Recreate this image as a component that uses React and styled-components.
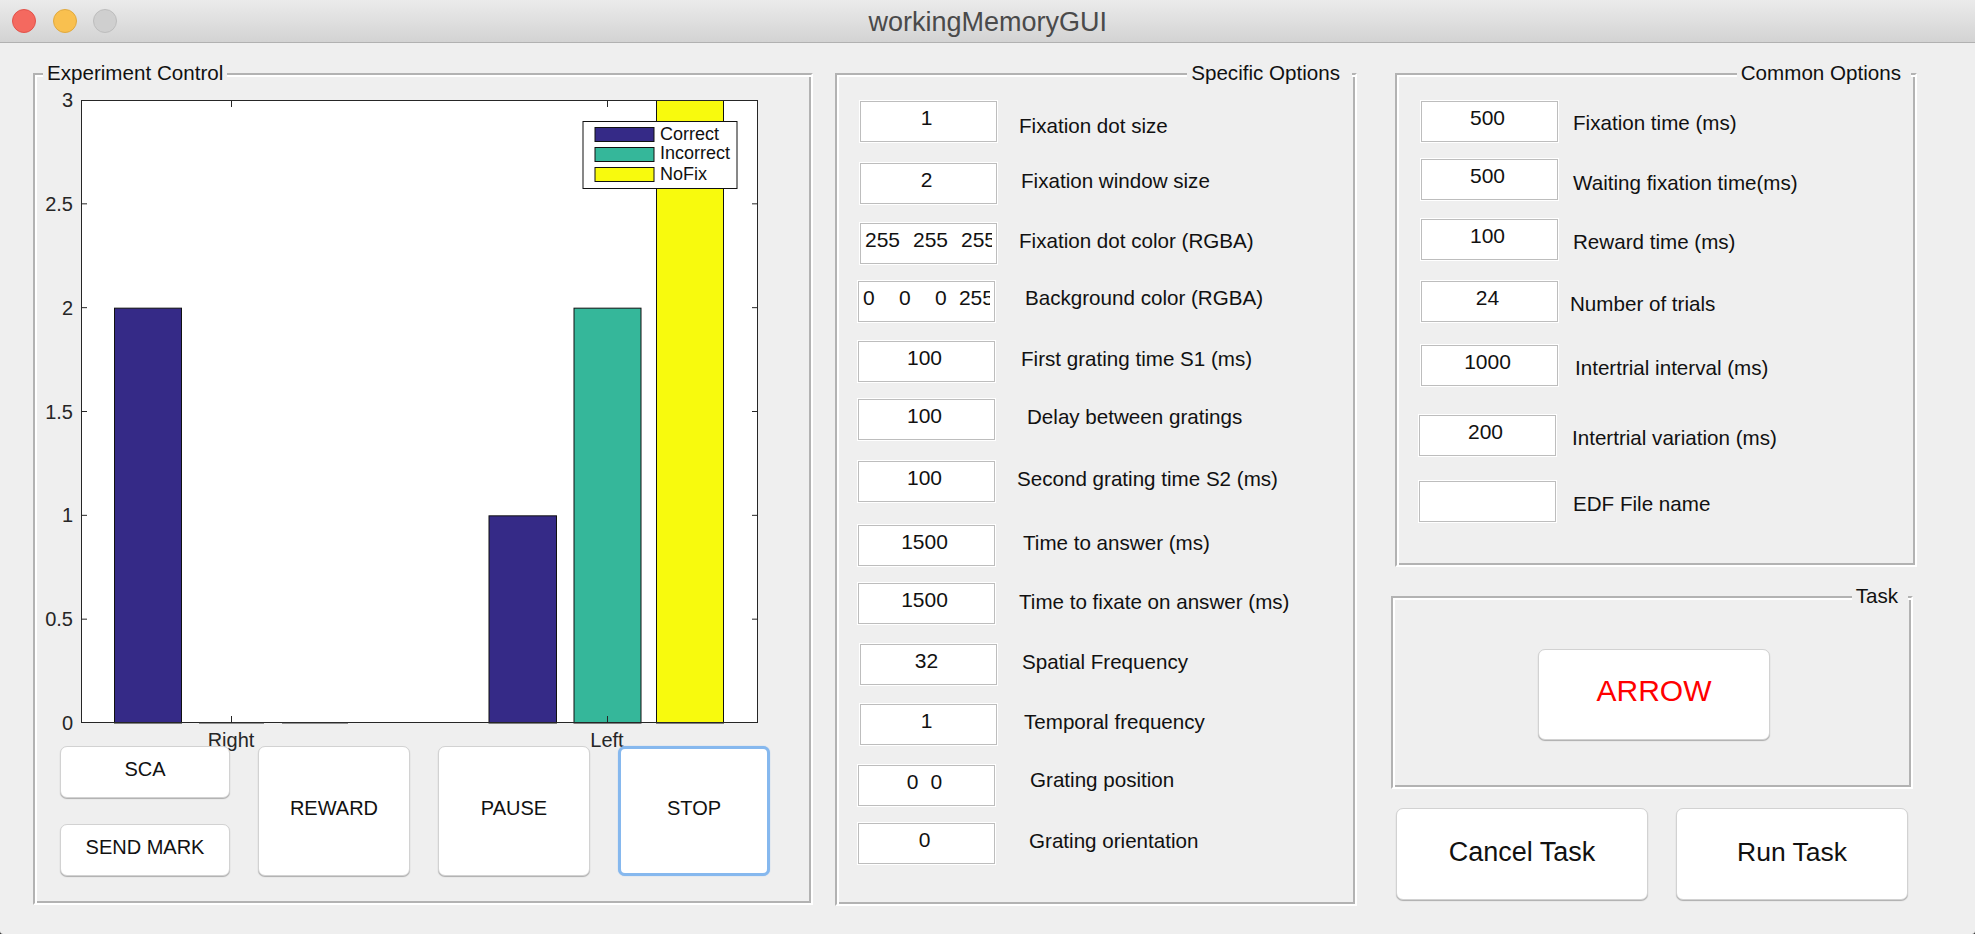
import React from 'react'
import styled, { createGlobalStyle } from 'styled-components'

const GlobalStyle = createGlobalStyle`
    html, body {
        margin: 0;
        padding: 0;
        background: #2e2e2e;
    }
    body {
        font-family: "Liberation Sans", Arial, sans-serif;
        color: #111;
    }
`

const Window = styled.div`
    width: 1975px;
    height: 934px;
    overflow: hidden;
    background: #efefef;
    border-radius: 0 0 3px 3px;
`

const TitleBar = styled.div`
    height: 43px;
    display: flex;
    align-items: center;
    box-sizing: border-box;
    padding-left: 12px;
    gap: 16.5px;
    background: linear-gradient(#ebebeb, #d3d3d3);
    border-bottom: 1px solid #b1b1b1;
`

const Light = styled.span`
    width: 24px;
    height: 24px;
    box-sizing: border-box;
    border-radius: 50%;
    background: ${props => props.$color};
    border: 1px solid ${props => props.$edge};
`

const Title = styled.div`
    flex: 1;
    margin-right: 133px;
    padding-top: 2px;
    text-align: center;
    font-size: 27px;
    color: #4a4a4a;
`

const Body = styled.div`
    display: flex;
    align-items: flex-start;
    padding: 30px 0 0 33px;
`

const Panel = styled.fieldset`
    position: relative;
    margin: ${props => props.$top || 0}px 0 0 ${props => props.$offset || 0}px;
    padding: 0;
    min-width: 0;
    box-sizing: border-box;
    width: ${props => props.$width}px;
    height: ${props => props.$height}px;
    border-style: solid;
    border-width: 2px;
    border-color: #b2b2b2 #fff #fff #b2b2b2;
    box-shadow: inset 2px 2px 0 #fff, inset -2px -2px 0 #b2b2b2;
`

const PanelTitle = styled.span`
    position: absolute;
    top: -14px;
    ${props => props.$right !== undefined ? `right: ${props.$right}px;` : `left: ${props.$left}px;`}
    padding: 0 ${props => props.$pad}px 0 4px;
    background: #efefef;
    font-size: 20.6px;
    line-height: 24px;
    white-space: nowrap;
`

const Chart = styled.svg`
    display: block;
    font-family: "Liberation Sans", Arial, sans-serif;
`

const Controls = styled.div`
    position: relative;
    display: flex;
    gap: 28px;
    margin-top: -6px;
    padding-left: 25px;
`

const StackedButtons = styled.div`
    display: flex;
    flex-direction: column;
    gap: 26px;
`

const Button = styled.button`
    width: ${props => props.$width}px;
    height: ${props => props.$height}px;
    box-sizing: border-box;
    padding: 0 0 ${props => props.$lift || 5}px;
    background: #fff;
    border: 1px solid #d2d2d2;
    border-radius: 7px;
    box-shadow: 0 1px 1px rgba(0, 0, 0, 0.28);
    font-family: inherit;
    font-size: ${props => props.$size || 20}px;
    color: ${props => props.$color || '#111'};
`

const FocusedButton = styled(Button)`
    border: 3px solid #86b8ee;
    box-shadow: 0 0 1px #86b8ee;
`

const RightColumn = styled.div`
    margin-left: 38px;
`

const TaskInner = styled.div`
    padding: 51px 0 0 145px;
`

const TaskButtons = styled.div`
    display: flex;
    gap: 28px;
    margin: 19px 0 0 1px;
`

const OptionList = styled.div`
    display: flex;
    flex-direction: column;
`

const OptionRow = styled.div`
    display: flex;
    align-items: flex-start;
    margin-top: ${props => props.$gap}px;
    padding-left: ${props => props.$inset}px;
`

const ValueInput = styled.input`
    flex: none;
    width: 137px;
    height: 41px;
    box-sizing: border-box;
    margin: 0;
    padding: 0 4px 7px ${props => props.$clip ? 4 : 0}px;
    background: #fff;
    border: 1px solid #bdbdbd;
    border-radius: 0;
    box-shadow: 0 0 0 1px #fff;
    outline: none;
    font-family: inherit;
    font-size: 21px;
    word-spacing: ${props => props.$clip === 'wide' ? 0.65 : 0.25}px;
    text-align: ${props => props.$clip ? 'left' : 'center'};
    color: #111;
`

const OptionLabel = styled.label`
    margin-left: ${props => props.$x}px;
    margin-top: ${props => props.$drop - 12}px;
    font-size: 20.6px;
    line-height: 24px;
    white-space: nowrap;
`

const specificOptions = [
    { value: '1', label: 'Fixation dot size', gap: 26, inset: 23, x: 22, drop: 25 },
    { value: '2', label: 'Fixation window size', gap: 21, inset: 23, x: 24, drop: 18 },
    { value: '255  255  255  255', clip: 'wide', label: 'Fixation dot color (RGBA)', gap: 19, inset: 23, x: 22, drop: 18 },
    { value: '0    0    0  255', clip: 'narrow', label: 'Background color (RGBA)', gap: 17, inset: 21, x: 30, drop: 17 },
    { value: '100', label: 'First grating time S1 (ms)', gap: 19, inset: 21, x: 26, drop: 18 },
    { value: '100', label: 'Delay between gratings', gap: 17, inset: 21, x: 32, drop: 18 },
    { value: '100', label: 'Second grating time S2 (ms)', gap: 21, inset: 21, x: 22, drop: 18 },
    { value: '1500', label: 'Time to answer (ms)', gap: 23, inset: 21, x: 28, drop: 18 },
    { value: '1500', label: 'Time to fixate on answer (ms)', gap: 17, inset: 21, x: 24, drop: 19 },
    { value: '32', label: 'Spatial Frequency', gap: 20, inset: 23, x: 25, drop: 18 },
    { value: '1', label: 'Temporal frequency', gap: 19, inset: 23, x: 27, drop: 18 },
    { value: '0  0', label: 'Grating position', gap: 20, inset: 21, x: 35, drop: 15 },
    { value: '0', label: 'Grating orientation', gap: 17, inset: 21, x: 34, drop: 18 },
]

const commonOptions = [
    { value: '500', label: 'Fixation time (ms)', gap: 26, inset: 24, x: 15, drop: 22 },
    { value: '500', label: 'Waiting fixation time(ms)', gap: 17, inset: 24, x: 15, drop: 24 },
    { value: '100', label: 'Reward time (ms)', gap: 19, inset: 24, x: 15, drop: 23 },
    { value: '24', label: 'Number of trials', gap: 21, inset: 24, x: 12, drop: 23 },
    { value: '1000', label: 'Intertrial interval (ms)', gap: 23, inset: 24, x: 17, drop: 23 },
    { value: '200', label: 'Intertrial variation (ms)', gap: 29, inset: 22, x: 16, drop: 23 },
    { value: '', label: 'EDF File name', gap: 25, inset: 22, x: 17, drop: 23 },
]

const Options = ({ rows }) => (
    <OptionList>
        {rows.map(row => (
            <OptionRow key={row.label} $gap={row.gap} $inset={row.inset}>
                <ValueInput readOnly value={row.value} $clip={row.clip} aria-label={row.label} />
                <OptionLabel $x={row.x} $drop={row.drop}>{row.label}</OptionLabel>
            </OptionRow>
        ))}
    </OptionList>
)

// chart coordinates are window pixels, see the viewBox
const AXIS = '#262626'
const NAVY = '#352a87'
const TEAL = '#35b79a'
const YELLOW = '#f8fa0d'
const left = 81
const right = 758
const top = 100
const bottom = 723
const yFor = v => bottom - (v / 3) * (bottom - top)

const bars = [
    { x: 114.5, w: 67, v: 2, fill: NAVY },
    { x: 489, w: 67.5, v: 1, fill: NAVY },
    { x: 574, w: 67, v: 2, fill: TEAL },
    { x: 656.5, w: 67, v: 3, fill: YELLOW },
]

const yTicks = [0, 0.5, 1, 1.5, 2, 2.5, 3]
const xTicks = [{ x: 231, label: 'Right' }, { x: 607, label: 'Left' }]
const legend = [
    { fill: NAVY, label: 'Correct', y: 127, textY: 140 },
    { fill: TEAL, label: 'Incorrect', y: 147, textY: 159 },
    { fill: YELLOW, label: 'NoFix', y: 167, textY: 180 },
]

const BarChart = () => (
    <Chart width="776" height="677" viewBox="35 75 776 677">
        <rect x={left} y={top} width={right - left} height={bottom - top} fill="#fff" />
        {bars.map(b => (
            <rect key={b.x} x={b.x} y={yFor(b.v) + 0.5} width={b.w} height={bottom - yFor(b.v) - 0.5} fill={b.fill} stroke="#111" strokeWidth="1" />
        ))}
        <path d={`M${left} ${top + 0.5}H${right}M${left + 0.5} ${top}V${bottom}M${right - 0.5} ${top}V${bottom}M${left} ${bottom - 0.5}H${right}`} stroke={AXIS} strokeWidth="1" fill="none" />
        <path d="M199 723H264M282 723H348" stroke="#333" strokeWidth="1" fill="none" />
        {yTicks.map(v => (
            <g key={v}>
                {v > 0 && v < 3 && (
                    <path d={`M${left} ${yFor(v)}h6M${right} ${yFor(v)}h-6`} stroke={AXIS} strokeWidth="1" />
                )}
                <text x="73" y={yFor(v) + 7} textAnchor="end" fontSize="20" fill={AXIS}>{v}</text>
            </g>
        ))}
        {xTicks.map(t => (
            <g key={t.label}>
                <path d={`M${t.x + 0.5} ${top}v7M${t.x + 0.5} ${bottom}v-7`} stroke={AXIS} strokeWidth="1" />
                <text x={t.x} y="747" textAnchor="middle" fontSize="20" fill={AXIS}>{t.label}</text>
            </g>
        ))}
        <rect x="583" y="121.5" width="154" height="67" fill="#fff" stroke="#111" strokeWidth="1" />
        {legend.map(l => (
            <g key={l.label}>
                <rect x="595" y={l.y + 0.5} width="59" height="14" fill={l.fill} stroke="#111" strokeWidth="1" />
                <text x="660" y={l.textY} fontSize="18" fill="#111">{l.label}</text>
            </g>
        ))}
    </Chart>
)

const App = () => (
    <Window>
        <GlobalStyle />
        <TitleBar>
            <Light $color="#f4695f" $edge="#e2524a" />
            <Light $color="#f9c04f" $edge="#e0a93f" />
            <Light $color="#cfcfcf" $edge="#bdbdbd" />
            <Title>workingMemoryGUI</Title>
        </TitleBar>
        <Body>
            <Panel $width={780} $height={832}>
                <PanelTitle $left={8} $pad={4}>Experiment Control</PanelTitle>
                <BarChart />
                <Controls>
                    <StackedButtons>
                        <Button $width={170} $height={52}>SCA</Button>
                        <Button $width={170} $height={52}>SEND MARK</Button>
                    </StackedButtons>
                    <Button $width={152} $height={130}>REWARD</Button>
                    <Button $width={152} $height={130}>PAUSE</Button>
                    <FocusedButton $width={152} $height={130}>STOP</FocusedButton>
                </Controls>
            </Panel>
            <Panel $width={522} $height={833} $offset={22}>
                <PanelTitle $right={3} $pad={12}>Specific Options</PanelTitle>
                <Options rows={specificOptions} />
            </Panel>
            <RightColumn>
                <Panel $width={522} $height={494}>
                    <PanelTitle $right={4} $pad={10}>Common Options</PanelTitle>
                    <Options rows={commonOptions} />
                </Panel>
                <Panel $width={522} $height={193} $offset={-4} $top={29}>
                    <PanelTitle $right={3} $pad={10}>Task</PanelTitle>
                    <TaskInner>
                        <Button $width={232} $height={91} $size={30} $color="#ff0000" $lift={8}>ARROW</Button>
                    </TaskInner>
                </Panel>
                <TaskButtons>
                    <Button $width={252} $height={92} $size={27} $lift={3}>Cancel Task</Button>
                    <Button $width={232} $height={92} $size={26.5} $lift={3}>Run Task</Button>
                </TaskButtons>
            </RightColumn>
        </Body>
    </Window>
)

export default App
